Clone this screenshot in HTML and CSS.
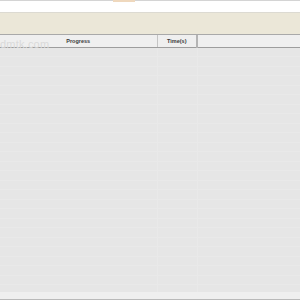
FILE: index.html
```html
<!DOCTYPE html>
<html lang="en">
<head>
  <meta charset="UTF-8" />
  <title>Transfers</title>
  <link rel="stylesheet" href="styles.css">
</head>
<body>
  <div class="window">
    <div class="topbar"><span class="tab-hint"></span></div>
    <div class="toolbar"></div>

    <div class="list">
      <table class="grid">
        <colgroup>
          <col class="col-progress">
          <col class="col-time">
          <col>
        </colgroup>
        <thead>
          <tr>
            <th>Progress</th>
            <th class="sep">Time(s)</th>
            <th></th>
          </tr>
        </thead>
        <tbody id="rows"></tbody>
      </table>
      <span class="watermark">dmtk.com</span>
    </div>

    <div class="statusbar"></div>
  </div>

  <script>
    // empty rows to fill the list
    const rows = document.getElementById('rows');
    for (let i = 0; i < 26; i++) {
      const tr = document.createElement('tr');
      tr.innerHTML = '<td></td><td></td><td></td>';
      rows.appendChild(tr);
    }
  </script>
</body>
</html>
```

FILE: styles.css
```css
* {
  margin: 0;
  padding: 0;
  box-sizing: border-box;
}

body {
  font-family: "Liberation Sans", Arial, sans-serif;
  background-color: #ffffff;
}

.window {
  width: 300px;
  height: 300px;
  display: flex;
  flex-direction: column;
  overflow: hidden;
}

.topbar {
  height: 12px;
  border-top: 1px solid #d4d4d4;
  background-color: #ffffff;
  display: flex;
}

.tab-hint {
  margin-left: 113px;
  margin-top: -1px;
  width: 22px;
  height: 2px;
  background-color: #efd8bd;
}

.toolbar {
  height: 23px;
  background-color: #ebe7d8;
  border-top: 1px solid #dcdad2;
  border-bottom: 1px solid #a9a9a9;
}

.list {
  position: relative;
  flex: 1;
  overflow: hidden;
  background-color: #e6e6e6;
}

.grid {
  width: 100%;
  border-collapse: collapse;
  table-layout: fixed;
}

.col-progress {
  width: 157px;
}

.col-time {
  width: 40px;
}

.grid th {
  height: 12px;
  background-color: #efefef;
  border-bottom: 1px solid #9d9d9d;
  border-right: 1px solid #c4c4c4;
  font-size: 5.5px;
  font-weight: bold;
  color: #3a3a3a;
  text-align: center;
  vertical-align: middle;
}

.grid th.sep {
  border-right: 2px solid #b4b4b4;
}

.grid th:last-child {
  border-right: none;
}

.grid td {
  height: 9.5px;
  border-bottom: 1px solid #e9e9e9;
  border-right: 1px solid #e9e9e9;
}

.grid td:last-child {
  border-right: none;
}

.watermark {
  position: absolute;
  left: 0;
  top: 3px;
  font-size: 11px;
  color: #dadada;
  letter-spacing: 0.2px;
}

.statusbar {
  height: 8px;
  background-color: #efefef;
  border-bottom: 1px solid #b9b9b9;
}
```
